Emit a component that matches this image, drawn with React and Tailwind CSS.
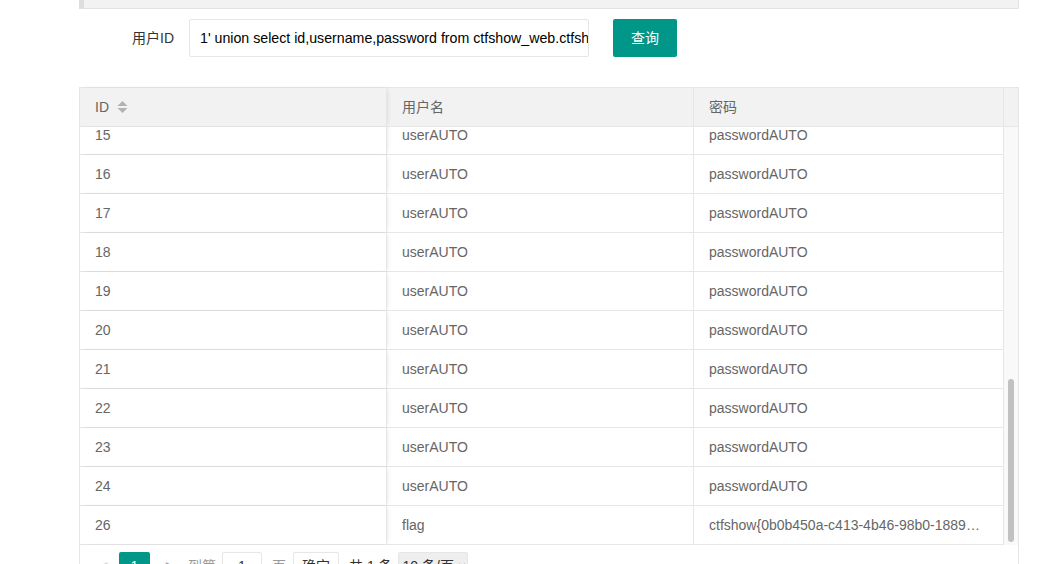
import { useState } from 'react';

const rows = [
  { id: 15, user: 'userAUTO', pass: 'passwordAUTO' },
  { id: 16, user: 'userAUTO', pass: 'passwordAUTO' },
  { id: 17, user: 'userAUTO', pass: 'passwordAUTO' },
  { id: 18, user: 'userAUTO', pass: 'passwordAUTO' },
  { id: 19, user: 'userAUTO', pass: 'passwordAUTO' },
  { id: 20, user: 'userAUTO', pass: 'passwordAUTO' },
  { id: 21, user: 'userAUTO', pass: 'passwordAUTO' },
  { id: 22, user: 'userAUTO', pass: 'passwordAUTO' },
  { id: 23, user: 'userAUTO', pass: 'passwordAUTO' },
  { id: 24, user: 'userAUTO', pass: 'passwordAUTO' },
  { id: 26, user: 'flag', pass: 'ctfshow{0b0b450a-c413-4b46-98b0-18894d7c9e21}' },
];

function SortIcon() {
  return (
    <svg width="11" height="12" viewBox="0 0 11 12" className="ml-[8px]">
      <path d="M0.5 5 L5.5 0 L10.5 5 Z" fill="#b2b2b2" />
      <path d="M0.5 7 L5.5 12 L10.5 7 Z" fill="#b2b2b2" />
    </svg>
  );
}

function App() {
  const [userId, setUserId] = useState("1' union select id,username,password from ctfshow_web.ctfshow_user where username = 'flag' --+");

  return (
    <div
      className="h-[564px] overflow-hidden bg-white text-[14px] text-[#666]"
      style={{ fontFamily: '"Liberation Sans", "Noto Sans CJK SC", sans-serif' }}
    >
      <div className="ml-[79px] w-[940px]">
        <div className="h-[9px] border-b border-r border-l-[5px] border-b-[#e2e2e2] border-r-[#e2e2e2] border-l-[#dedede] bg-[#f2f2f2]" />

        <div className="mt-[10px] flex items-center">
          <label className="w-[110px] pr-[15px] text-right text-[#333]">用户ID</label>
          <input
            value={userId}
            onChange={(e) => setUserId(e.target.value)}
            className="h-[38px] w-[400px] rounded-[2px] border border-[#e6e6e6] bg-white pl-[10px] text-[14.2px] text-black outline-none"
          />
          <button
            type="button"
            className="ml-[24px] h-[38px] w-[64px] rounded-[2px] bg-[#009688] text-[14px] text-white"
          >
            查询
          </button>
        </div>

        <div className="mt-[30px] border border-[#e6e6e6]">
          <div className="flex h-[39px] border-b border-[#e6e6e6] bg-[#f2f2f2]">
            <div className="relative z-10 flex w-[307px] items-center border-r border-[#e6e6e6] px-[15px] shadow-[2px_0_5px_-2px_rgba(0,0,0,0.12)]">
              ID
              <SortIcon />
            </div>
            <div className="flex w-[307px] items-center border-r border-[#e6e6e6] px-[15px]">用户名</div>
            <div className="flex w-[310px] items-center border-r border-[#e6e6e6] px-[15px]">密码</div>
            <div className="flex-1" />
          </div>

          <div className="flex h-[418px] overflow-hidden">
            <div className="w-[924px]">
              <div className="-mt-[11px]">
                {rows.map((r) => (
                  <div key={r.id} className="flex h-[39px] border-b border-[#e6e6e6]">
                    <div className="relative z-10 flex w-[307px] items-center border-r border-[#e6e6e6] bg-white px-[15px] shadow-[2px_0_5px_-2px_rgba(0,0,0,0.12)]">
                      {r.id}
                    </div>
                    <div className="flex w-[307px] items-center border-r border-[#e6e6e6] px-[15px]">{r.user}</div>
                    <div className="flex w-[310px] items-center border-r border-[#e6e6e6] pl-[15px] pr-[18px]">
                      <span className="truncate">{r.pass}</span>
                    </div>
                  </div>
                ))}
              </div>
            </div>
            <div className="flex flex-1 flex-col bg-[#f9f9f9] px-[4px]">
              <div className="mt-[252px] h-[163px] rounded-[4px] bg-[#c1c1c1]" />
            </div>
          </div>

          <div className="flex h-[40px] items-start whitespace-nowrap pl-[9px] pt-[7px]">
            <span className="flex h-[28px] w-[30px] items-center justify-center text-[#d2d2d2]">&lt;</span>
            <span className="flex h-[28px] w-[31px] items-center justify-center rounded-[2px] bg-[#009688] text-white">1</span>
            <span className="flex h-[28px] w-[38px] items-center justify-center text-[#999]">&gt;</span>
            <span className="flex h-[28px] items-center text-[#999]">到第</span>
            <span className="ml-[6px] flex h-[28px] w-[40px] items-center justify-center rounded-[2px] border border-[#e6e6e6] text-[#333]">1</span>
            <span className="ml-[10px] flex h-[28px] items-center text-[#999]">页</span>
            <span className="ml-[7px] flex h-[28px] w-[46px] items-center justify-center rounded-[2px] border border-[#e6e6e6] text-[#333]">确定</span>
            <span className="ml-[10px] flex h-[28px] items-center text-[#333]">共 1 条</span>
            <span className="ml-[5px] flex h-[28px] w-[70px] items-center rounded-[2px] border border-[#e6e6e6] bg-[#eee] pl-[4px] text-[#333]">
              10 条/页
              <svg width="8" height="6" viewBox="0 0 8 6" className="ml-[4px] shrink-0">
                <path d="M1 1 L4 4 L7 1" stroke="#666" strokeWidth="1.2" fill="none" />
              </svg>
            </span>
          </div>
        </div>
      </div>
    </div>
  );
}

export default App;
